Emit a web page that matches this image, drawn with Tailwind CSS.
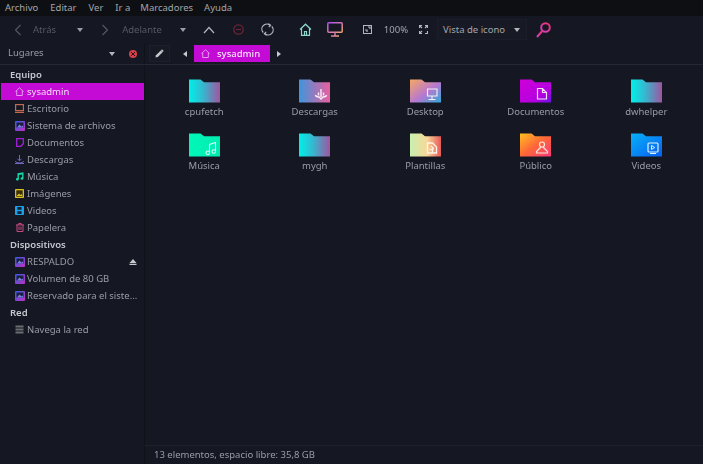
<!DOCTYPE html>
<html lang="es">

<head>
  <meta charset="UTF-8">
  <title>sysadmin</title>
  <script src="https://cdn.jsdelivr.net/npm/@tailwindcss/browser@4"></script>
</head>

<body class="bg-[#151823] text-[#9a9da6] font-['Noto_Sans',sans-serif] text-[9.500px] leading-none overflow-hidden">
  <svg class="absolute w-0 h-0">
    <defs>
      <linearGradient id="gCyan"><stop offset="0" stop-color="#00f0e8"/><stop offset="0.45" stop-color="#35b8d0"/><stop offset="1" stop-color="#a055a0"/></linearGradient>
      <linearGradient id="gDown"><stop offset="0" stop-color="#3f96dc"/><stop offset="1" stop-color="#ea5f9f"/></linearGradient>
      <linearGradient id="gDesk" x1="0" y1="0" x2="1" y2="1"><stop offset="0" stop-color="#f6a860"/><stop offset="0.55" stop-color="#b878d0"/><stop offset="1" stop-color="#30a8d8"/></linearGradient>
      <linearGradient id="gDocs" x1="0" y1="0" x2="1" y2="1"><stop offset="0" stop-color="#d000d8"/><stop offset="0.7" stop-color="#b400e0"/><stop offset="1" stop-color="#6a10e8"/></linearGradient>
      <linearGradient id="gMusic"><stop offset="0" stop-color="#00f8b8"/><stop offset="1" stop-color="#00ecb0"/></linearGradient>
      <linearGradient id="gTpl"><stop offset="0" stop-color="#c8f0b0"/><stop offset="0.55" stop-color="#f8d898"/><stop offset="1" stop-color="#e85858"/></linearGradient>
      <linearGradient id="gPub" x1="0" y1="0" x2="1" y2="1"><stop offset="0" stop-color="#ffc020"/><stop offset="0.5" stop-color="#ff6838"/><stop offset="1" stop-color="#f83878"/></linearGradient>
      <linearGradient id="gVid" x1="0" y1="0" x2="1" y2="1"><stop offset="0" stop-color="#08b0f8"/><stop offset="1" stop-color="#0860f0"/></linearGradient>
      <linearGradient id="gSearch" x1="1" y1="0" x2="0" y2="1"><stop offset="0" stop-color="#f03070"/><stop offset="1" stop-color="#d040c0"/></linearGradient>
      <linearGradient id="gMon" x1="0" y1="0" x2="1" y2="1"><stop offset="0" stop-color="#b050f0"/><stop offset="1" stop-color="#f0a070"/></linearGradient>
      <linearGradient id="gDisk" x1="0" y1="0" x2="1" y2="1"><stop offset="0" stop-color="#3060e8"/><stop offset="1" stop-color="#c030c0"/></linearGradient>
      <symbol id="folder" viewBox="0 0 31 24"><path d="M0 0.500h11.500l3.500 2.800h16v20.200h-31z"/></symbol>
      <symbol id="disk" viewBox="0 0 10 10"><rect width="10" height="10" rx="1" fill="url(#gDisk)"/><rect x="1.500" y="1.500" width="7" height="5" fill="#1c2040"/><path d="M2 6.500l2.500-3 2 2 1.500-1v2z" fill="#7a80e0"/></symbol>
    </defs>
  </svg>

  <div class="flex flex-col h-[464px] w-[703px] blur-[0.35px]">
    <!-- menu -->
    <nav class="h-4 shrink-0 bg-[#0d0f13] flex items-center pl-[5px] gap-[12px] text-[#a3a5aa]">
      <span>Archivo</span><span>Editar</span><span>Ver</span><span>Ir a</span><span class="-ml-[2px]">Marcadores</span><span class="-ml-[1px]">Ayuda</span>
    </nav>

    <!-- toolbar -->
    <div class="h-[27px] shrink-0 flex items-center relative text-[#555a66]">
      <svg class="ml-[14px] w-[8px] h-[12px]" viewBox="0 0 8 12" fill="none" stroke="#555a66" stroke-width="1.100"><path d="M6.500 1L1.500 6l5 5"/></svg>
      <span class="ml-[11px]">Atrás</span>
      <span class="ml-[21px] w-0 h-0 border-x-[3.500px] border-x-transparent border-t-[4px] border-t-[#9a9da6]"></span>
      <svg class="ml-[18px] w-[8px] h-[12px]" viewBox="0 0 8 12" fill="none" stroke="#555a66" stroke-width="1.100"><path d="M1.500 1l5 5-5 5"/></svg>
      <span class="ml-[13px]">Adelante</span>
      <span class="ml-[18px] w-0 h-0 border-x-[3.500px] border-x-transparent border-t-[4px] border-t-[#9a9da6]"></span>
      <svg class="ml-[17px] w-[12px] h-[8px]" viewBox="0 0 12 8" fill="none" stroke="#b4b6bb" stroke-width="1.200"><path d="M1 7l5-5.500L11 7"/></svg>
      <svg class="ml-[18px] w-[11px] h-[11px]" viewBox="0 0 11 11" fill="none" stroke="#6e2436" stroke-width="1.200"><circle cx="5.500" cy="5.500" r="4.700"/><path d="M3 5.500h5"/></svg>
      <svg class="ml-[17px] w-[13px] h-[13px]" viewBox="0 0 13 13" fill="none" stroke="#b4b6bb" stroke-width="1.200"><path d="M2.200 9.500A5 5 0 0 1 9 2.200M10.800 3.500A5 5 0 0 1 4 10.800"/><path d="M7.500 0.800L9.600 2.400 7.800 4.200M5.500 12.200L3.400 10.600 5.200 8.800"/></svg>
      <svg class="ml-[25px] w-[13px] h-[13px]" viewBox="0 0 13 13" fill="none" stroke="#8fd8d0" stroke-width="1.200"><path d="M1 6.500L6.500 1.200 12 6.500M2.500 5.500v6.800h8V5.500"/><path d="M5.500 12.300V8.500h2v3.800"/></svg>
      <svg class="ml-[15px] w-[16px] h-[15px]" viewBox="0 0 16 15" fill="none" stroke="url(#gMon)" stroke-width="1.500"><rect x="0.800" y="0.800" width="14.400" height="9.400" rx="1"/><path d="M8 10.500v3M4 14h8"/></svg>
      <svg class="ml-[20px] w-[9px] h-[9px]" viewBox="0 0 9 9" fill="none" stroke="#b4b6bb"><rect x="0.500" y="0.500" width="8" height="8"/><path d="M5 2h2v2M2 5h2v2" stroke-width="1.200"/></svg>
      <span class="ml-[12px] text-[#a3a5aa]">100%</span>
      <svg class="ml-[11px] w-[9px] h-[9px]" viewBox="0 0 9 9" fill="none" stroke="#b4b6bb" stroke-width="1.200"><path d="M0.500 3V0.500H3M6 0.500h2.500V3M8.500 6v2.500H6M3 8.500H0.500V6"/><path d="M3 3L1 1M6 3l2-2M3 6L1 8"/></svg>
      <div class="ml-[9px] w-[90px] h-[21px] flex items-center justify-between pl-[5px] pr-[5px] bg-[#171a25] border border-[#1b1e2a] text-[#a3a5aa]">
        <span>Vista de icono</span>
        <span class="mr-[1px] w-0 h-0 border-x-[3.500px] border-x-transparent border-t-[4px] border-t-[#b4b6bb]"></span>
      </div>
      <svg class="ml-[9px] w-[15px] h-[16px]" viewBox="0 0 15 16" fill="none" stroke="url(#gSearch)" stroke-width="2"><circle cx="9.500" cy="5.500" r="4.300"/><path d="M6.200 9L1 15"/></svg>
    </div>

    <!-- places header + path bar -->
    <div class="h-[22px] shrink-0 flex border-b border-[#262935]">
      <div class="w-[144px] shrink-0 flex items-center pl-2 text-[#9a9da6] relative">
        <span class="-translate-y-[1px]">Lugares</span>
        <span class="ml-[65px] w-0 h-0 border-x-[3.500px] border-x-transparent border-t-[4px] border-t-[#b4b6bb]"></span>
        <span class="ml-[14px] w-[8px] h-[8px] rounded-full bg-[#d8404c] flex items-center justify-center">
          <svg class="w-[4px] h-[4px]" viewBox="0 0 4 4" stroke="#2a1015" stroke-width="1"><path d="M0 0l4 4M4 0L0 4"/></svg>
        </span>
      </div>
      <div class="flex-1 flex items-center border-l border-[#10121a]">
        <span class="ml-[4px] w-[21px] h-[17px] flex items-center justify-center bg-[#171a25] border border-[#1d202c]">
          <svg class="w-[9px] h-[9px]" viewBox="0 0 9 9" fill="#c8c9cd"><path d="M0.500 8.500L1 6.200 5.800 1.400 7.600 3.200 2.800 8z"/><path d="M6.500 0.700l0.700-0.200 1.300 1.300-0.200 0.700-0.600 0.500-1.800-1.800z"/></svg>
        </span>
        <span class="ml-[13px] w-0 h-0 border-y-[3.500px] border-y-transparent border-r-[4px] border-r-[#c8c9cd]"></span>
        <div class="ml-[7px] w-[76px] h-[17px] bg-[#c40bd6] flex items-center pl-[7px] text-[#f6e6f8] font-medium">
          <svg class="w-[9px] h-[9px]" viewBox="0 0 9 9" fill="none" stroke="#e9a8ef" stroke-width="0.900"><path d="M0.500 4.500L4.500 0.800l4 3.700M1.700 3.700v4.800h5.600V3.700"/></svg>
          <span class="ml-[7px]">sysadmin</span>
        </div>
        <span class="ml-[7px] w-0 h-0 border-y-[3.500px] border-y-transparent border-l-[4px] border-l-[#c8c9cd]"></span>
      </div>
    </div>

    <div class="flex-1 flex min-h-0">
      <!-- sidebar -->
      <aside class="w-[144px] shrink-0 pt-px flex flex-col">
        <div class="h-[17px] pl-[10px] flex items-center font-semibold text-[#c4c7ce]">Equipo</div>
        <div class="h-[17px] ml-[1px] pl-[14px] flex items-center bg-[#c40bd6] text-[#f3dcf6] gap-[3px]">
          <svg class="w-[9px] h-[9px] shrink-0" viewBox="0 0 9 9" fill="none" stroke="#e9a8ef" stroke-width="0.900"><path d="M0.500 4.500L4.500 0.800l4 3.700M1.700 3.700v4.800h5.600V3.700"/></svg>
          <span>sysadmin</span>
        </div>
        <div class="h-[17px] pl-[15px] flex items-center gap-[3px]">
          <svg class="w-[9px] h-[9px] shrink-0" viewBox="0 0 9 9" fill="none" stroke="#c06a50" stroke-width="1.200"><rect x="0.600" y="0.600" width="7.800" height="6"/><path d="M0 8.400h9"/></svg>
          <span>Escritorio</span>
        </div>
        <div class="h-[17px] pl-[15px] flex items-center gap-[2px]">
          <svg class="w-[10px] h-[10px] shrink-0"><use href="#disk"/></svg>
          <span>Sistema de archivos</span>
        </div>
        <div class="h-[17px] pl-[16px] flex items-center gap-[3px]">
          <svg class="w-[8px] h-[9px] shrink-0" viewBox="0 0 8 9" fill="none" stroke="#a020d8" stroke-width="1.300"><path d="M0.700 0.700h6.600v5l-2.500 2.600H0.700z"/></svg>
          <span>Documentos</span>
        </div>
        <div class="h-[17px] pl-[15px] flex items-center gap-[3px]">
          <svg class="w-[9px] h-[9px] shrink-0" viewBox="0 0 9 9" fill="none" stroke="#7a70d8" stroke-width="0.900"><path d="M4.500 0v5.500M2.500 3.800l2 2 2-2M0.300 6.200c1 2.300 7.400 2.300 8.400 0M0 8.500h9"/></svg>
          <span>Descargas</span>
        </div>
        <div class="h-[17px] pl-[15px] flex items-center gap-[3px]">
          <svg class="w-[9px] h-[9px] shrink-0" viewBox="0 0 9 9" fill="#14d8a8"><path d="M2.500 1.200L8.500 0.300v6.200a1.500 1.300 0 1 1-1.400-1.300V2.400L3.900 2.900v4.300a1.500 1.300 0 1 1-1.400-1.300z"/></svg>
          <span>Música</span>
        </div>
        <div class="h-[17px] pl-[15px] flex items-center gap-[3px]">
          <svg class="w-[9px] h-[9px] shrink-0" viewBox="0 0 9 9"><rect width="9" height="9" rx="0.800" fill="#d8c020"/><rect x="1.300" y="1.300" width="6.400" height="6.400" fill="#3a3010"/><path d="M1.500 7L4 4.500 5.500 6 6.500 5l1 2z" fill="#d8c020"/></svg>
          <span>Imágenes</span>
        </div>
        <div class="h-[17px] pl-[15px] flex items-center gap-[3px]">
          <svg class="w-[9px] h-[9px] shrink-0" viewBox="0 0 9 9" fill="none"><rect width="9" height="9" rx="0.800" fill="#1ea0e8"/><rect x="2.400" y="1" width="4.200" height="2.800" fill="#122438"/><rect x="2.400" y="5.200" width="4.200" height="2.800" fill="#122438"/></svg>
          <span>Videos</span>
        </div>
        <div class="h-[17px] pl-[16px] flex items-center gap-[3px]">
          <svg class="w-[8px] h-[9px] shrink-0" viewBox="0 0 8 9" fill="none" stroke="#d85088" stroke-width="0.900"><path d="M0 1.900h8M2.700 1.900V0.500h2.600v1.400M1 2v6.500h6V2M3 3.500v3.500M5 3.500v3.500"/></svg>
          <span>Papelera</span>
        </div>
        <div class="h-[17px] pl-[10px] flex items-center font-semibold text-[#c4c7ce]">Dispositivos</div>
        <div class="h-[17px] pl-[15px] pr-[7px] flex items-center gap-[2px]">
          <svg class="w-[10px] h-[10px] shrink-0"><use href="#disk"/></svg>
          <span class="flex-1">RESPALDO</span>
          <svg class="w-[8px] h-[6px]" viewBox="0 0 8 6" fill="#c8c9cd"><path d="M4 0l3.500 4h-7zM0.500 4.800h7V6h-7z"/></svg>
        </div>
        <div class="h-[17px] pl-[15px] flex items-center gap-[2px]">
          <svg class="w-[10px] h-[10px] shrink-0"><use href="#disk"/></svg>
          <span>Volumen de 80 GB</span>
        </div>
        <div class="h-[17px] pl-[15px] flex items-center gap-[2px]">
          <svg class="w-[10px] h-[10px] shrink-0"><use href="#disk"/></svg>
          <span>Reservado para el siste...</span>
        </div>
        <div class="h-[17px] pl-[10px] flex items-center font-semibold text-[#c4c7ce]">Red</div>
        <div class="h-[17px] pl-[15px] flex items-center gap-[3px]">
          <svg class="w-[9px] h-[9px] shrink-0" viewBox="0 0 9 9" fill="#6a6c70"><path d="M0.500 0.500h8v2h-8zM0.500 3.500h8v2h-8zM0.500 6.500h8v2h-8z"/></svg>
          <span>Navega la red</span>
        </div>
      </aside>

      <!-- files -->
      <div class="flex-1 flex flex-col border-l border-[#10121a] min-w-0">
        <main class="flex-1 pl-[4px] pt-[14px]">
          <div class="grid grid-cols-[repeat(5,110.500px)] auto-rows-[54px]">
            <div class="flex flex-col items-center">
              <svg class="w-[31px] h-6" fill="url(#gCyan)"><use href="#folder"/></svg>
              <span class="mt-[3px] h-[12px] leading-[12px]">cpufetch</span>
            </div>
            <div class="flex flex-col items-center">
              <svg class="w-[31px] h-6" viewBox="0 0 31 24"><path fill="url(#gDown)" d="M0 0.500h11.500l3.500 2.800h16v20.200h-31z"/><path fill="none" stroke="#f8e8f2" stroke-width="1.500" d="M22 10v8M19.500 13.500v3M24.500 13.500v3M16.500 16c0 1.800 3.500 2 3.500 2l2 2 2-2s3.500-0.200 3.500-2"/></svg>
              <span class="mt-[3px] h-[12px] leading-[12px]">Descargas</span>
            </div>
            <div class="flex flex-col items-center">
              <svg class="w-[31px] h-6" viewBox="0 0 31 24"><path fill="url(#gDesk)" d="M0 0.500h11.500l3.500 2.800h16v20.200h-31z"/><path fill="none" stroke="#f2f0f4" stroke-width="1.100" d="M17.500 10h9.500v7h-9.500zM22 17v3M18.500 20.500h7"/></svg>
              <span class="mt-[3px] h-[12px] leading-[12px]">Desktop</span>
            </div>
            <div class="flex flex-col items-center">
              <svg class="w-[31px] h-6" viewBox="0 0 31 24"><path fill="url(#gDocs)" d="M0 0.500h11.500l3.500 2.800h16v20.200h-31z"/><path fill="none" stroke="#f4e0f8" stroke-width="1.200" d="M17.500 9.500h5l4 4v6.500h-9zM22.500 9.500v4h4"/></svg>
              <span class="mt-[3px] h-[12px] leading-[12px]">Documentos</span>
            </div>
            <div class="flex flex-col items-center">
              <svg class="w-[31px] h-6" fill="url(#gCyan)"><use href="#folder"/></svg>
              <span class="mt-[3px] h-[12px] leading-[12px]">dwhelper</span>
            </div>
            <div class="flex flex-col items-center">
              <svg class="w-[31px] h-6" viewBox="0 0 31 24"><path fill="url(#gMusic)" d="M0 0.500h11.500l3.500 2.800h16v20.200h-31z"/><path fill="none" stroke="#d8fff0" stroke-width="1.100" d="M20.500 19.500v-8l6-2v8.500"/><circle cx="18.800" cy="19.800" r="1.800" fill="none" stroke="#d8fff0" stroke-width="1.100"/><circle cx="24.800" cy="18.500" r="1.800" fill="none" stroke="#d8fff0" stroke-width="1.100"/></svg>
              <span class="mt-[3px] h-[12px] leading-[12px]">Música</span>
            </div>
            <div class="flex flex-col items-center">
              <svg class="w-[31px] h-6" fill="url(#gCyan)"><use href="#folder"/></svg>
              <span class="mt-[3px] h-[12px] leading-[12px]">mygh</span>
            </div>
            <div class="flex flex-col items-center">
              <svg class="w-[31px] h-6" viewBox="0 0 31 24"><path fill="url(#gTpl)" d="M0 0.500h11.500l3.500 2.800h16v20.200h-31z"/><path fill="none" stroke="#fff4e8" stroke-width="1.300" d="M17.500 10h5l4 4v6h-9zM21 13l3 3M19.500 16.500h3v3"/></svg>
              <span class="mt-[3px] h-[12px] leading-[12px]">Plantillas</span>
            </div>
            <div class="flex flex-col items-center">
              <svg class="w-[31px] h-6" viewBox="0 0 31 24"><path fill="url(#gPub)" d="M0 0.500h11.500l3.500 2.800h16v20.200h-31z"/><circle cx="22" cy="11.500" r="2.500" fill="none" stroke="#ffe8e0" stroke-width="1.200"/><path fill="none" stroke="#ffe8e0" stroke-width="1.200" d="M21 14l-4.500 4.500v1.500h11v-1.500L23 14"/></svg>
              <span class="mt-[3px] h-[12px] leading-[12px]">Público</span>
            </div>
            <div class="flex flex-col items-center">
              <svg class="w-[31px] h-6" viewBox="0 0 31 24"><path fill="url(#gVid)" d="M0 0.500h11.500l3.500 2.800h16v20.200h-31z"/><rect x="17" y="10" width="10" height="9" rx="1" fill="none" stroke="#e0f0ff" stroke-width="1.200"/><path fill="none" stroke="#e0f0ff" d="M20.500 12.500v4l3.200-2z"/><path stroke="#e0f0ff" d="M19 20.500h6"/></svg>
              <span class="mt-[3px] h-[12px] leading-[12px]">Videos</span>
            </div>
          </div>
        </main>
        <footer class="h-[19px] shrink-0 border-t border-[#1e212d] flex items-center pl-[9px]">13 elementos, espacio libre: 35,8 GB</footer>
      </div>
    </div>
  </div>
</body>

</html>
